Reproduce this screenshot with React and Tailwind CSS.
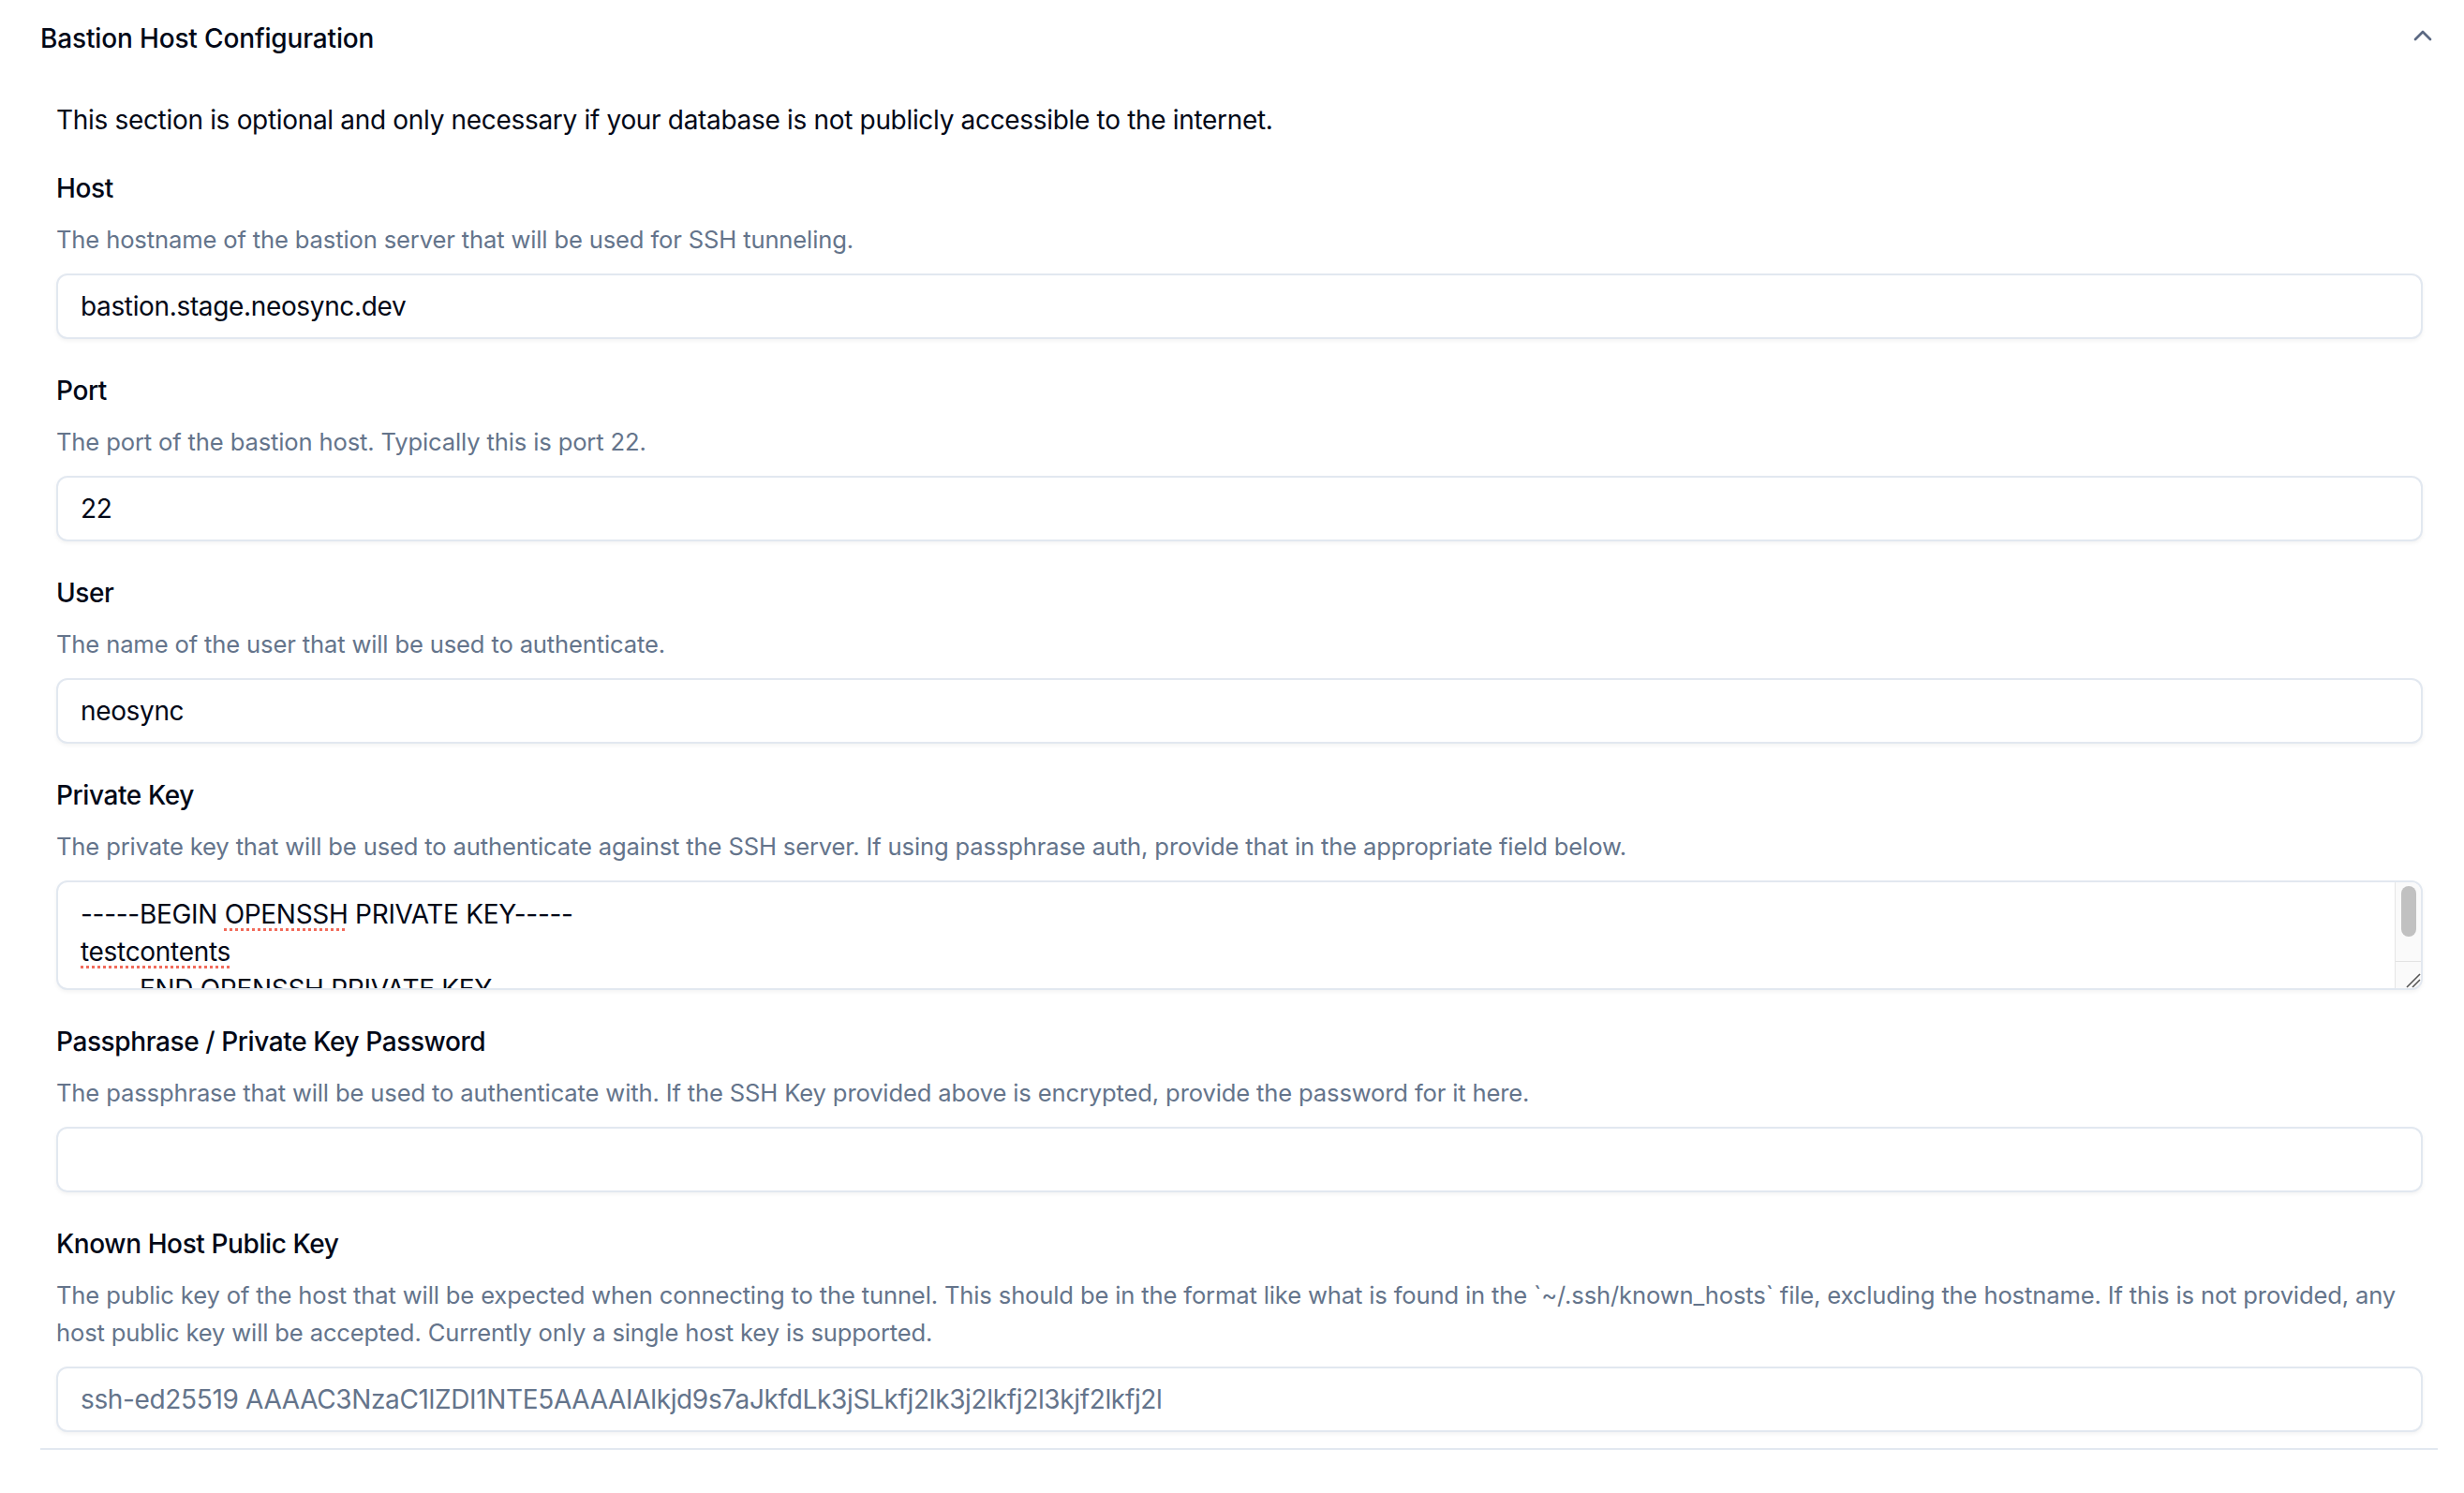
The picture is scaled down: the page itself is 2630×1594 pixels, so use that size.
import React from "react";
import { ChevronDown } from "lucide-react";

function Field({ label, desc, children, first }) {
  return (
    <div className={first ? "mt-[39px]" : "mt-[41px]"}>
      <div className="text-[28px] leading-[28px] font-medium tracking-[-0.4px] text-[#020817]">{label}</div>
      <p className="mt-[21px] text-[25.6px] leading-[40px] tracking-[-0.15px] text-[#64748b]">{desc}</p>
      <div className="mt-[16px]">{children}</div>
    </div>
  );
}

function TextInput({ value, placeholder }) {
  return (
    <input
      readOnly
      defaultValue={value}
      placeholder={placeholder}
      className="block h-[70px] w-full rounded-[12px] border-2 border-[#e2e8f0] bg-white px-[24px] text-[28px] leading-[40px] tracking-[-0.35px] text-[#020817] shadow-[0_2px_4px_0_rgba(0,0,0,0.05)] outline-none placeholder:text-[#64748b]"
    />
  );
}

function KeyArea() {
  return (
    <div className="relative h-[117px] w-full overflow-hidden rounded-[12px] border-2 border-[#e2e8f0] bg-white shadow-[0_2px_4px_0_rgba(0,0,0,0.05)]">
      <div className="pl-[24px] pr-[40px] pt-[14px] text-[28px] leading-[40px] tracking-[-0.3px] text-[#020817] whitespace-pre">
        <div>
          -----BEGIN{" "}
          <span className="underline decoration-dotted decoration-[#f26b5b] decoration-[3px] underline-offset-[5px]">OPENSSH</span>{" "}
          PRIVATE KEY-----
        </div>
        <div>
          <span className="underline decoration-dotted decoration-[#f26b5b] decoration-[3px] underline-offset-[5px]">testcontents</span>
        </div>
        <div>-----END OPENSSH PRIVATE KEY-----</div>
      </div>
      <div className="absolute right-0 top-0 bottom-0 flex w-[28px] flex-col border-l border-[#e6e6e6] bg-[#fafafa]">
        <div className="flex-1 pt-[4px] pl-[6px]">
          <div className="h-[54px] w-[16px] rounded-full bg-[#c1c1c1]" />
        </div>
        <div className="relative h-[29px] border-t border-[#e3e3e3]">
          <svg className="absolute right-0 bottom-0" width="18" height="18" viewBox="0 0 18 18">
            <line x1="3" y1="17" x2="17" y2="3" stroke="#555" strokeWidth="1.6" />
            <line x1="9" y1="17" x2="17" y2="9" stroke="#555" strokeWidth="1.6" />
          </svg>
        </div>
      </div>
    </div>
  );
}

export default function App() {
  return (
    <div className="min-h-screen bg-white font-['Inter',sans-serif] text-[#020817]">
      <div className="ml-[43px] w-[2559px] border-b-2 border-[#e2e8f0]">
        <div className="flex w-full items-start justify-between pt-[21px]">
          <span className="text-[28px] leading-[40px] font-medium tracking-[-0.15px]">Bastion Host Configuration</span>
          <ChevronDown className="mt-[1px] h-[32px] w-[32px] rotate-180 text-[#5c6983]" strokeWidth={2} />
        </div>
        <div className="pl-[17px] pr-[16px] pb-[17px]">
          <p className="mt-[47px] text-[28px] leading-[40px] tracking-[-0.32px]">
            This section is optional and only necessary if your database is not publicly accessible to the internet.
          </p>
          <Field first label="Host" desc="The hostname of the bastion server that will be used for SSH tunneling.">
            <TextInput value="bastion.stage.neosync.dev" />
          </Field>
          <Field label="Port" desc="The port of the bastion host. Typically this is port 22.">
            <TextInput value="22" />
          </Field>
          <Field label="User" desc="The name of the user that will be used to authenticate.">
            <TextInput value="neosync" />
          </Field>
          <Field
            label="Private Key"
            desc="The private key that will be used to authenticate against the SSH server. If using passphrase auth, provide that in the appropriate field below."
          >
            <KeyArea />
          </Field>
          <Field
            label="Passphrase / Private Key Password"
            desc="The passphrase that will be used to authenticate with. If the SSH Key provided above is encrypted, provide the password for it here."
          >
            <TextInput value="" />
          </Field>
          <Field
            label="Known Host Public Key"
            desc={
              <>
                The public key of the host that will be expected when connecting to the tunnel. This should be in the format like what is found in the `~/.ssh/known_hosts` file, excluding the hostname. If this is not provided, any
                <br />
                host public key will be accepted. Currently only a single host key is supported.
              </>
            }
          >
            <TextInput value="" placeholder="ssh-ed25519 AAAAC3NzaC1lZDI1NTE5AAAAIAlkjd9s7aJkfdLk3jSLkfj2lk3j2lkfj2l3kjf2lkfj2l" />
          </Field>
        </div>
      </div>
    </div>
  );
}
